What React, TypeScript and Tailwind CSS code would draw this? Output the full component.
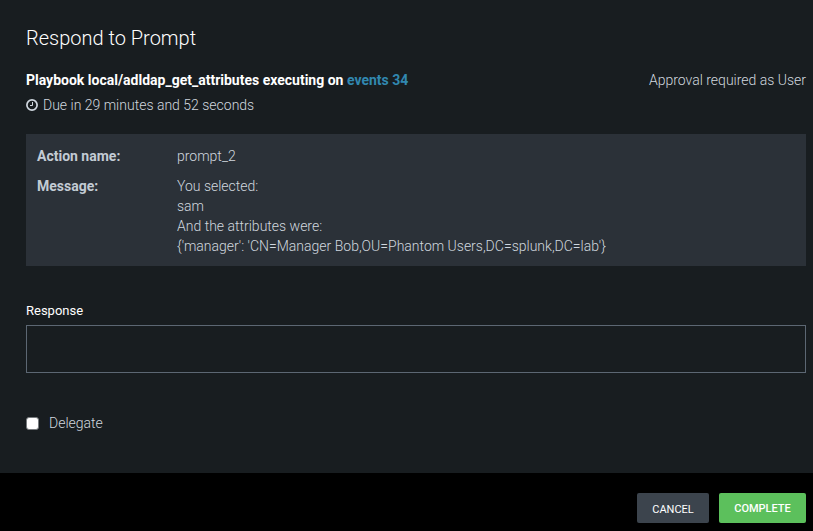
export default function App() {
  return (
    <main className="flex min-h-screen flex-col bg-[#181d20] font-['Roboto',sans-serif] text-sm leading-5 font-light text-[#d0d7df]">
      <form className="flex flex-1 flex-col" onSubmit={(e) => e.preventDefault()}>
        <div className="flex-1 pt-6 pr-[7px] pb-10 pl-[26px]">
          <h1 className="text-xl leading-7 font-light text-white">Respond to Prompt</h1>
          <div className="mt-[18px] flex justify-between">
            <h2 className="font-bold text-white">
              Playbook local/adldap_get_attributes executing on{" "}
              <a href="#events" className="text-[#3188b0]">events 34</a>
            </h2>
            <p>Approval required as User</p>
          </div>
          <p className="mt-[5px] flex items-center gap-[5px]">
            <svg className="size-3" viewBox="0 0 12 12" fill="none" stroke="currentColor" strokeWidth="1.7" aria-hidden="true">
              <circle cx="6" cy="6" r="5.1" />
              <path d="M6.5 3v3.5H4" strokeWidth="1" />
            </svg>
            Due in 29 minutes and 52 seconds
          </p>
          <dl className="mt-[19px] grid grid-cols-[140px_1fr] gap-y-[10px] bg-[#2b3138] px-[11px] pt-3 pb-[10px]">
            <dt className="font-bold text-[#c3cbd4]">Action name:</dt>
            <dd>prompt_2</dd>
            <dt className="font-bold text-[#c3cbd4]">Message:</dt>
            <dd className="whitespace-pre-line">
              {"You selected:\nsam\nAnd the attributes were:\n{'manager': 'CN=Manager Bob,OU=Phantom Users,DC=splunk,DC=lab'}"}
            </dd>
          </dl>
          <label htmlFor="response" className="mt-[35px] block text-[13px] font-normal text-white">Response</label>
          <textarea id="response" className="mt-1 block h-12 w-full resize-none border border-[#5c6773] bg-transparent p-2 outline-none" />
          <label className="mt-10 flex items-center gap-[10px]">
            <input type="checkbox" className="size-[13px] appearance-none rounded-[3px] border border-[#777b7e] bg-white checked:bg-[#3188b0]" />
            Delegate
          </label>
        </div>
        <footer className="flex justify-end gap-[10px] bg-black pt-5 pr-[7px] pb-2">
          <button type="button" className="h-[30px] w-[72px] rounded-xs bg-[#3c444d] pt-[3px] text-[11px] font-normal text-white">CANCEL</button>
          <button type="submit" className="h-[30px] w-[87px] rounded-xs bg-[#5cc05c] pt-px text-[11px] font-medium text-white">COMPLETE</button>
        </footer>
      </form>
    </main>
  );
}
